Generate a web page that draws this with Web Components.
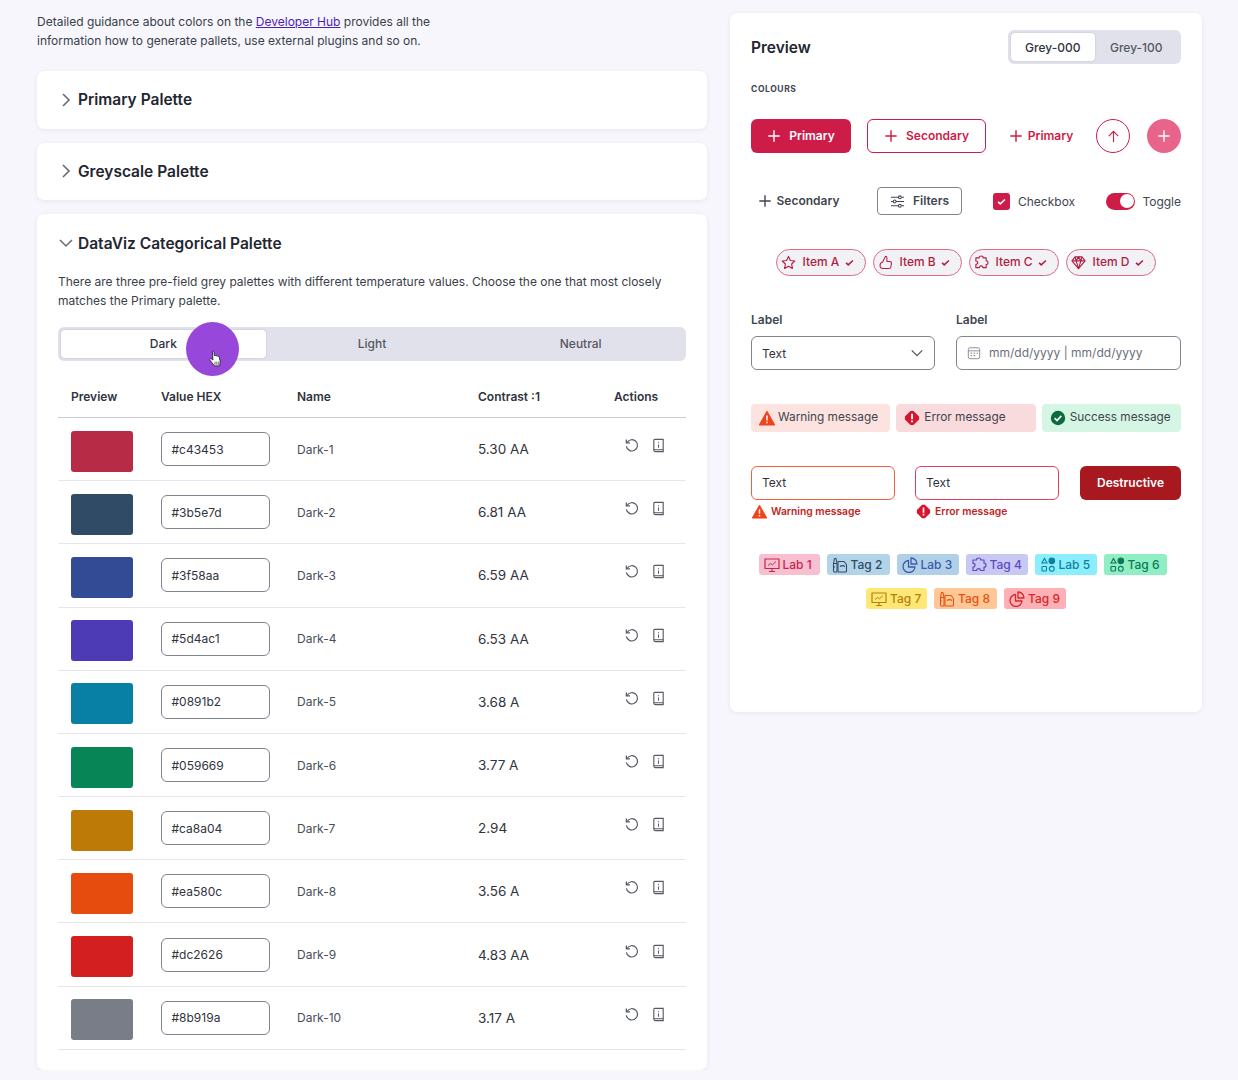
<!DOCTYPE html>
<html lang="en">
<head>
<meta charset="utf-8">
<title>Palettes</title>
<style>
  html, body { margin: 0; background: #f6f6fc; }
  body { font-family: Inter, "Noto Sans", sans-serif; font-size: 12px; color: #3a3e49; overflow: hidden; }
</style>
</head>
<body>
<palette-page></palette-page>

<script>
const ICONS = {
  chevronRight: '<path d="M5 2l6 6-6 6" fill="none" stroke="currentColor" stroke-width="1.6"/>',
  chevronDown: '<path d="M2 5l6 6 6-6" fill="none" stroke="currentColor" stroke-width="1.5"/>',
  plus: '<path d="M8 1.500v13M1.500 8h13" fill="none" stroke="currentColor" stroke-width="1.600"/>',
  arrowUp: '<path d="M8 14V2.500M3 7.500l5-5 5 5" fill="none" stroke="currentColor" stroke-width="1.200"/>',
  sliders: '<g fill="none" stroke="currentColor" stroke-width="1.100"><path d="M1 3.500h8M12 3.500h3M1 8h2.500M6.500 8H15M1 12.500h8M12 12.500h3"/><circle cx="10.500" cy="3.500" r="1.500"/><circle cx="5" cy="8" r="1.500"/><circle cx="10.500" cy="12.500" r="1.500"/></g>',
  check: '<path d="M3 8.500l3.200 3L13 5" fill="none" stroke="currentColor" stroke-width="2.200"/>',
  star: '<path d="M8 1.500l2 4.300 4.700.6-3.400 3.200.9 4.700L8 12l-4.200 2.300.9-4.700L1.300 6.400 6 5.800z" fill="none" stroke="currentColor" stroke-width="1.200" stroke-linejoin="round"/>',
  thumb: '<path d="M5 14.500h6.500c1.200 0 2-.7 2.200-1.800l.6-3.500c.2-1.200-.6-2.200-1.800-2.200H9.500V3.200C9.500 2 8.800 1.300 8 1.300L5 7.500c-1.500.5-2.800 1.700-2.800 3.500 0 2 1.200 3.500 2.800 3.500z" fill="none" stroke="currentColor" stroke-width="1.100" stroke-linejoin="round"/>',
  puzzle: '<path d="M5.500 3C5.500 1.600 6.600 1 7.600 1s2.200.6 2.200 2H13v3.200c1.400 0 2 1 2 2s-.6 2-2 2v3.300H9.600c0-1.200-.8-1.900-2-1.900s-2 .7-2 1.900H2V10c1.400 0 2-.8 2-1.800S3.400 6.400 2 6.400V3z" fill="none" stroke="currentColor" stroke-width="1.200" stroke-linejoin="round"/>',
  diamond: '<g fill="none" stroke="currentColor" stroke-width="1.200" stroke-linejoin="round"><path d="M4.300 2h7.400L15 6.300 8 14.500 1 6.300z"/><path d="M1 6.300h14M5.500 6.300L8 14.500l2.500-8.200M4.300 2l1.200 4.300L8 2l2.500 4.300L11.700 2"/></g>',
  warning: '<path d="M8 1.200L15.800 15H.2z" fill="#f0431c" stroke="#f0431c" stroke-linejoin="round"/><path d="M8 5.500v5M8 11.800v1.500" stroke="#fff" stroke-width="1.500"/>',
  error: '<path d="M6.500.9h3l5.600 5.600v3l-5.600 5.600h-3L.9 9.500v-3z" fill="#d8152f"/><path d="M8 3.800v5.400M8 10.500v1.700" stroke="#fff" stroke-width="1.800"/>',
  success: '<circle cx="8" cy="8" r="7.200" fill="#0c6b3c"/><path d="M4.600 8.200l2.400 2.300 4.300-4.600" fill="none" stroke="#fff" stroke-width="1.700"/>',
  calendar: '<g fill="none" stroke="currentColor"><rect x="1.500" y="2" width="13" height="12.500" rx="2"/><path d="M1.500 5.500h13"/><path d="M4 8.200h2M7.500 8.200h2M11 8.200h1.500M4 11h2M7.500 11h2" stroke-width="1.100"/></g>',
  present: '<g fill="none" stroke="currentColor" stroke-width="1.200" stroke-linejoin="round"><path d="M1 2h14v9.500H1zM8 11.500v3M5 14.500h6"/><path d="M4 8.500l2.500-2 2 1.300L12 4.500" stroke-width="1"/></g>',
  tools: '<g fill="none" stroke="currentColor" stroke-width="1.100" stroke-linejoin="round"><path d="M6 4.500h6l2.500 3v6.500a1 1 0 0 1-1 1H6z"/><path d="M1.500 13.500V6.500l1-5 1.500 0 1 5v7a1.500 1.500 0 0 1-3.500 0zM1.500 6.500h3.500M1.500 10h1.500"/><path d="M8 9.500c1.500-1 3.500-1 5 0"/></g>',
  pie: '<g fill="none" stroke="currentColor" stroke-width="1.300" stroke-linejoin="round"><path d="M6.500 3.500a6 6 0 1 0 6.500 6.500H6.500z"/><path d="M9 1a6 6 0 0 1 6 6H9z"/></g>',
  shapes: '<g fill="none" stroke="currentColor" stroke-width="1.100"><path d="M4.500 1.500L7 6H2z"/><circle cx="11.800" cy="3.800" r="2.800" fill="currentColor"/><rect x="2" y="9.500" width="4.500" height="4.500" rx=".8"/><circle cx="11.800" cy="11.800" r="2.400"/></g>',
  undo: '<path d="M3.200 4.800A6 6 0 1 1 2.500 9" fill="none" stroke="currentColor" stroke-width="1.300"/><path d="M2.500 1.500v3.800h3.800" fill="none" stroke="currentColor" stroke-width="1.300"/>',
  book: '<g fill="none" stroke="currentColor" stroke-width="1.200"><path d="M3 12.500V2.500a1 1 0 0 1 1-1h9v11z"/><path d="M3 12.500c0 1 .5 2 1.500 2H13v-2"/></g><path d="M8 4.500v1M8 7v3.500" stroke="currentColor" stroke-width="1.100"/>'
};

class PalIcon extends HTMLElement {
  connectedCallback() {
    const size = this.getAttribute("size") || 16;
    const name = this.getAttribute("name");
    this.attachShadow({ mode: "open" }).innerHTML = `
      <style>
        :host { display: inline-flex; flex: none; width: ${size}px; height: ${size}px; }
        svg { width: 100%; height: 100%; display: block; }
      </style>
      <svg viewBox="0 0 16 16">${ICONS[name]}</svg>`;
  }
}

class PalAccordion extends HTMLElement {
  connectedCallback() {
    const open = this.hasAttribute("open");
    this.attachShadow({ mode: "open" }).innerHTML = `
      <style>
        :host { display: block; background: #fff; border-radius: 7px; box-shadow: 0 1px 4px rgba(40,45,80,.08); }
        .head { height: 57.670px; display: flex; align-items: center; gap: 4px; padding: 0 21px; box-sizing: border-box;
                font-size: 15.500px; font-weight: 600; color: #23262f; }
        .head pal-icon { color: #666a74; }
        .body { padding: 0 21px 20px; }
      </style>
      <div class="head">
        <pal-icon name="${open ? "chevronDown" : "chevronRight"}"></pal-icon>
        <span>${this.getAttribute("heading")}</span>
      </div>
      ${open ? '<div class="body"><slot></slot></div>' : ""}`;
  }
}

class PalSegment extends HTMLElement {
  connectedCallback() {
    const items = this.getAttribute("items").split(",");
    const active = +(this.getAttribute("active") || 0);
    this.attachShadow({ mode: "open" }).innerHTML = `
      <style>
        :host { display: flex; height: 34px; box-sizing: border-box; padding: 3px; gap: ${items.length > 2 ? 4 : 0}px; background: #e0e1ea; border-radius: 6px; }
        div { flex: 1; display: flex; align-items: center; justify-content: center; font-size: 12px; font-weight: 500; color: #555963; border-radius: 4px; }
        .on { background: #fff; color: #30343e; box-shadow: 0 0 2px rgba(30,30,60,.2); }
      </style>
      ${items.map((t, i) => `<div class="${i === active ? "on" : ""}">${t}</div>`).join("")}`;
  }
}

class PalRow extends HTMLElement {
  connectedCallback() {
    const a = n => this.getAttribute(n);
    this.attachShadow({ mode: "open" }).innerHTML = `
      <style>
        :host { display: grid; grid-template-columns: 90px 136px 181px 136px 1fr; align-items: center; height: 63.200px; box-sizing: border-box;
                padding: 0 0 0 13px; border-bottom: 1px solid #e6e7ee; }
        .sw { width: 62px; height: 41px; margin-top: 4px; border-radius: 3px; background: ${a("swatch")}; }
        .hex { width: 109px; height: 34px; box-sizing: border-box; border: 1px solid #7f848f; border-radius: 6px; padding-left: 9.500px;
               display: flex; align-items: center; font-size: 12px; color: #30343e; }
        .name { color: #494d58; font-size: 12px; }
        .ct { color: #30343e; font-size: 13.500px; }
        .act { display: flex; gap: 12px; padding-left: 10px; margin-top: -7px; color: #555963; }
      </style>
      <div class="sw"></div>
      <div class="hex">${a("hex")}</div>
      <div class="name">${a("label")}</div>
      <div class="ct">${a("contrast")}</div>
      <div class="act"><pal-icon name="undo" size="15"></pal-icon><pal-icon name="book" size="15"></pal-icon></div>`;
  }
}

class PalTable extends HTMLElement {
  connectedCallback() {
    const rows = [
      ["#b82b47", "#c43453", "Dark-1", "5.30 AA"],
      ["#2f4b66", "#3b5e7d", "Dark-2", "6.81 AA"],
      ["#334a94", "#3f58aa", "Dark-3", "6.59 AA"],
      ["#4d3bb5", "#5d4ac1", "Dark-4", "6.53 AA"],
      ["#0880a5", "#0891b2", "Dark-5", "3.68 A"],
      ["#088557", "#059669", "Dark-6", "3.77 A"],
      ["#bd7a07", "#ca8a04", "Dark-7", "2.94"],
      ["#e54c0e", "#ea580c", "Dark-8", "3.56 A"],
      ["#d31f1f", "#dc2626", "Dark-9", "4.83 AA"],
      ["#787d87", "#8b919a", "Dark-10", "3.17 A"]
    ];
    this.attachShadow({ mode: "open" }).innerHTML = `
      <style>
        :host { display: block; }
        .head { display: grid; grid-template-columns: 90px 136px 181px 136px 1fr; align-items: center; height: 42px; box-sizing: border-box; padding: 0 0 0 13px;
                margin-top: 15px; border-bottom: 1px solid #c9cbd6; font-size: 12px; font-weight: 600; color: #30343e; }
      </style>
      <div class="head"><span>Preview</span><span>Value HEX</span><span>Name</span><span>Contrast :1</span><span>Actions</span></div>
      ${rows.map(r => `<pal-row swatch="${r[0]}" hex="${r[1]}" label="${r[2]}" contrast="${r[3]}"></pal-row>`).join("")}`;
  }
}

class PalButton extends HTMLElement {
  connectedCallback() {
    const a = n => this.getAttribute(n);
    this.attachShadow({ mode: "open" }).innerHTML = `
      <style>
        :host { display: inline-flex; align-items: center; justify-content: center; box-sizing: border-box; height: 34px; border-radius: 6px; flex: none;
                font-size: 12px; font-weight: 600; gap: ${a("gap") || 8}px; width: ${a("w")}px; }
        :host([kind=primary]) { background: #cd1c48; color: #fff; }
        :host([kind=secondary]) { background: #fff; color: #cd1c48; border: 1px solid #cd1c48; }
        :host([kind=ghost]) { color: #cd1c48; }
        :host([kind=ghostdark]) { color: #41454f; }
        :host([kind=filters]) { height: 28px; color: #41454f; border: 1px solid #7f848f; border-radius: 4px; }
        :host([kind=circle]) { border-radius: 50%; background: #fff; color: #cd1c48; border: 1px solid #cd1c48; }
        :host([kind=fab]) { border-radius: 50%; background: #e8648a; color: #fff; }
        :host([kind=destructive]) { background: #a8181f; color: #fff; }
        span { margin-bottom: 2px; }
        span:empty { display: none; }
      </style>
      ${a("icon") ? `<pal-icon name="${a("icon")}" size="${a("size") || 14}"></pal-icon>` : ""}<span><slot></slot></span>`;
  }
}

class PalChip extends HTMLElement {
  connectedCallback() {
    this.attachShadow({ mode: "open" }).innerHTML = `
      <style>
        :host { display: inline-flex; align-items: center; box-sizing: border-box; height: 27px; width: ${this.getAttribute("w")}px; padding: 0 0 0 4px; gap: 5.500px;
                border: 1.500px solid #dd6a80; border-radius: 14px; background: #f1f1f6; color: #b01f42; font-size: 12px; font-weight: 500; }
        span { margin: 0 -1px 2px 1px; }
      </style>
      <pal-icon name="${this.getAttribute("icon")}" size="15"></pal-icon>
      <span><slot></slot></span>
      <pal-icon name="check" size="11"></pal-icon>`;
  }
}

class PalAlert extends HTMLElement {
  connectedCallback() {
    this.attachShadow({ mode: "open" }).innerHTML = `
      <style>
        :host { flex: 1 1 0; min-width: 0; display: flex; align-items: center; gap: ${this.getAttribute("gap") || 3}px; box-sizing: border-box; height: 28px; padding: 0 8px; border-radius: 4px;
                background: ${this.getAttribute("bg")}; color: #3f434e; font-size: 11.800px; white-space: nowrap; }
        span { margin-bottom: 2px; }
      </style>
      <pal-icon name="${this.getAttribute("icon")}" size="16"></pal-icon><span><slot></slot></span>`;
  }
}

class PalField extends HTMLElement {
  connectedCallback() {
    const a = n => this.getAttribute(n);
    this.attachShadow({ mode: "open" }).innerHTML = `
      <style>
        :host { display: block; flex: none; width: ${a("w")}px; }
        .lab { font-size: 12px; font-weight: 600; color: #41454f; line-height: 15px; margin-bottom: 9px; }
        .box { display: flex; align-items: center; box-sizing: border-box; height: 34px; padding: 0 10px; gap: 8px; border: 1px solid ${a("line") || "#7f848f"};
               border-radius: 6px; background: #fff; color: #30343e; font-size: 12px; }
        .grow { flex: 1; margin-bottom: ${a("lift") || 0}px; }
        .msg { display: flex; align-items: center; gap: 4px; height: 16px; margin-top: 3px; font-size: 10.300px; font-weight: 600; color: #c02626; padding-left: 1px; }
        .cal { color: #7f848f; }
        .ph { color: #6b6f7a; }
      </style>
      ${a("label") ? `<div class="lab">${a("label")}</div>` : ""}
      <div class="box">
        ${a("lead") ? `<pal-icon class="cal" name="${a("lead")}" size="14"></pal-icon>` : ""}
        <span class="grow ${a("lead") ? "ph" : ""}"><slot></slot></span>
        ${a("trail") ? `<pal-icon name="${a("trail")}" size="14" style="color:#555963"></pal-icon>` : ""}
      </div>
      ${a("msg") ? `<div class="msg"><pal-icon name="${a("msgicon")}" size="15"></pal-icon><span>${a("msg")}</span></div>` : ""}`;
  }
}

class PalTag extends HTMLElement {
  connectedCallback() {
    const a = n => this.getAttribute(n);
    this.attachShadow({ mode: "open" }).innerHTML = `
      <style>
        :host { display: inline-flex; align-items: center; gap: 3px; box-sizing: border-box; height: 21px; width: ${a("w") || 62}px; padding-left: 5px; border-radius: 3px;
                background: ${a("bg")}; color: ${a("fg")}; font-size: 12px; font-weight: 500; }
      </style>
      <pal-icon name="${a("icon")}" size="16"></pal-icon><slot></slot>`;
  }
}

class PalPreview extends HTMLElement {
  connectedCallback() {
    this.attachShadow({ mode: "open" }).innerHTML = `
      <style>
        :host { display: block; width: 472px; height: 699px; box-sizing: border-box; padding: 17px 21px 0; background: #fff; border-radius: 7px;
                box-shadow: 0 1px 4px rgba(40,45,80,.08); flex: none; }
        .top { display: flex; justify-content: space-between; align-items: center; }
        h2 { margin: 0; font-size: 15.500px; font-weight: 600; color: #23262f; }
        pal-segment { width: 173px; }
        .cap { margin-top: 20px; height: 10px; line-height: 10px; font-size: 8.500px; font-weight: 700; letter-spacing: .6px; color: #41454f; }
        .row { display: flex; align-items: center; }
        .r1 { margin-top: 25px; }
        .r1 :nth-child(2) { margin-left: 16px; }
        .r1 :nth-child(5) { margin-left: 17px; }
        .r1 :nth-child(3), .r1 :nth-child(4) { margin-left: 23px; }
        .r2 { margin-top: 34px; height: 28px; padding-left: 7px; }
        .r2 pal-button:nth-child(2) { margin-left: 38px; }
        .ctl { display: inline-flex; align-items: center; gap: 8px; color: #41454f; font-size: 12px; margin-left: 31px; }
        .ctl:last-child { margin-left: auto; gap: 7px; }
        .box { width: 17px; height: 17px; border-radius: 3px; background: #cd1c48; color: #fff; display: flex; align-items: center; justify-content: center; }
        .sw { width: 29px; height: 17px; border-radius: 9px; background: #cd1c48; position: relative; }
        .sw i { position: absolute; right: 1.500px; top: 1.500px; width: 14px; height: 14px; border-radius: 50%; background: #fff; }
        .r3 { margin-top: 34px; justify-content: center; gap: 7px; }
        .r4 { margin-top: 36px; align-items: flex-start; justify-content: space-between; }
        .r5 { margin-top: 34px; gap: 6px; }
        .r6 { margin-top: 34px; align-items: flex-start; }
        .r6 :nth-child(2) { margin-left: 20px; }
        .r6 :nth-child(3) { margin-left: 21px; }
        .tagrow { display: flex; justify-content: center; gap: 7px; }
        .t1 { margin-top: 35px; padding-right: 7px; }
        .t2 { margin-top: 13px; }
      </style>
      <div class="top"><h2>Preview</h2><pal-segment items="Grey-000,Grey-100"></pal-segment></div>
      <div class="cap">COLOURS</div>
      <div class="row r1">
        <pal-button kind="primary" icon="plus" w="100">Primary</pal-button>
        <pal-button kind="secondary" icon="plus" w="119">Secondary</pal-button>
        <pal-button kind="ghost" icon="plus" w="64" gap="5">Primary</pal-button>
        <pal-button kind="circle" icon="arrowUp" size="15" w="34" gap="0"></pal-button>
        <pal-button kind="fab" icon="plus" w="34" gap="0"></pal-button>
      </div>
      <div class="row r2">
        <pal-button kind="ghostdark" icon="plus" w="81" gap="5">Secondary</pal-button>
        <pal-button kind="filters" icon="sliders" size="15" w="85">Filters</pal-button>
        <span class="ctl"><span class="box"><pal-icon name="check" size="11"></pal-icon></span>Checkbox</span>
        <span class="ctl"><span class="sw"><i></i></span>Toggle</span>
      </div>
      <div class="row r3">
        <pal-chip icon="star" w="90">Item A</pal-chip>
        <pal-chip icon="thumb" w="89">Item B</pal-chip>
        <pal-chip icon="puzzle" w="90">Item C</pal-chip>
        <pal-chip icon="diamond" w="90">Item D</pal-chip>
      </div>
      <div class="row r4">
        <pal-field label="Label" w="184" trail="chevronDown">Text</pal-field>
        <pal-field label="Label" w="225" lead="calendar" lift="2">mm/dd/yyyy | mm/dd/yyyy</pal-field>
      </div>
      <div class="row r5">
        <pal-alert icon="warning" bg="#fde3df">Warning message</pal-alert>
        <pal-alert icon="error" bg="#f9dbde" gap="4">Error message</pal-alert>
        <pal-alert icon="success" bg="#d5f6e4" gap="4">Success message</pal-alert>
      </div>
      <div class="row r6">
        <pal-field w="144" line="#f2613a" lift="2" msg="Warning message" msgicon="warning">Text</pal-field>
        <pal-field w="144" line="#e2405f" lift="2" msg="Error message" msgicon="error">Text</pal-field>
        <pal-button kind="destructive" w="101">Destructive</pal-button>
      </div>
      <div class="tagrow t1">
        <pal-tag icon="present" bg="#f7c0d0" fg="#c9264f" w="61">Lab 1</pal-tag>
        <pal-tag icon="tools" bg="#b3d4e8" fg="#2f4b66" w="63">Tag 2</pal-tag>
        <pal-tag icon="pie" bg="#b0d0e8" fg="#3f58aa">Lab 3</pal-tag>
        <pal-tag icon="puzzle" bg="#c7c9f4" fg="#5d4ac1">Tag 4</pal-tag>
        <pal-tag icon="shapes" bg="#8aeefc" fg="#0e7f9e">Lab 5</pal-tag>
        <pal-tag icon="shapes" bg="#90eec4" fg="#0b7a58" w="63">Tag 6</pal-tag>
      </div>
      <div class="tagrow t2">
        <pal-tag icon="present" bg="#fde777" fg="#b87f08" w="61">Tag 7</pal-tag>
        <pal-tag icon="tools" bg="#fec795" fg="#e8520e" w="63">Tag 8</pal-tag>
        <pal-tag icon="pie" bg="#fdb0b5" fg="#d92626">Tag 9</pal-tag>
      </div>`;
  }
}

class PalettePage extends HTMLElement {
  connectedCallback() {
    this.attachShadow({ mode: "open" }).innerHTML = `
      <style>
        :host { display: flex; align-items: flex-start; gap: 23px; padding: 12px 0 0 37px; }
        .left { width: 670px; flex: none; position: relative; }
        p { margin: 0; line-height: 19px; font-size: 12px; color: #3a3e49; }
        .intro { width: 420px; margin-bottom: 21px; }
        a { color: #4c1fb8; }
        pal-accordion + pal-accordion { margin-top: 14px; }
        .desc { margin-bottom: 17px; }
        pal-preview { margin-top: 1px; }
        .cursor { position: absolute; left: 149px; top: 310px; width: 53px; height: 54px; border-radius: 50%; background: #9747d9; }
        .cursor svg { position: absolute; left: 22px; top: 28px; }
      </style>
      <div class="left">
        <p class="intro">Detailed guidance about colors on the <a href="#">Developer Hub</a> provides all the information how to generate pallets, use external plugins and so on.</p>
        <pal-accordion heading="Primary Palette"></pal-accordion>
        <pal-accordion heading="Greyscale Palette"></pal-accordion>
        <pal-accordion heading="DataViz Categorical Palette" open>
          <p class="desc">There are three pre-field grey palettes with different temperature values. Choose the one that most closely matches the Primary palette.</p>
          <pal-segment items="Dark,Light,Neutral"></pal-segment>
          <pal-table></pal-table>
        </pal-accordion>
        <div class="cursor">
          <svg width="15" height="18" viewBox="0 0 13 17"><path d="M3.500 1.200c.7-.5 1.500 0 1.600.8l.4 3.500c.4-.5 1.200-.5 1.500.1.400-.4 1.200-.3 1.500.3.500-.3 1.200-.1 1.400.5l1 3.800c.3 1.800-.1 3.300-.8 4.800H5.500L1.200 9.500c-.6-.8.400-1.900 1.300-1.200l1.600 1.200z" fill="#fff" stroke="#2a2a33" stroke-width=".9" stroke-linejoin="round"/><path d="M6 11v3M7.800 11v3M9.600 11v3" stroke="#2a2a33" stroke-width=".7"/></svg>
        </div>
      </div>
      <pal-preview></pal-preview>`;
  }
}

customElements.define("pal-icon", PalIcon);
customElements.define("pal-accordion", PalAccordion);
customElements.define("pal-segment", PalSegment);
customElements.define("pal-row", PalRow);
customElements.define("pal-table", PalTable);
customElements.define("pal-button", PalButton);
customElements.define("pal-chip", PalChip);
customElements.define("pal-alert", PalAlert);
customElements.define("pal-field", PalField);
customElements.define("pal-tag", PalTag);
customElements.define("pal-preview", PalPreview);
customElements.define("palette-page", PalettePage);
</script>
</body>
</html>
